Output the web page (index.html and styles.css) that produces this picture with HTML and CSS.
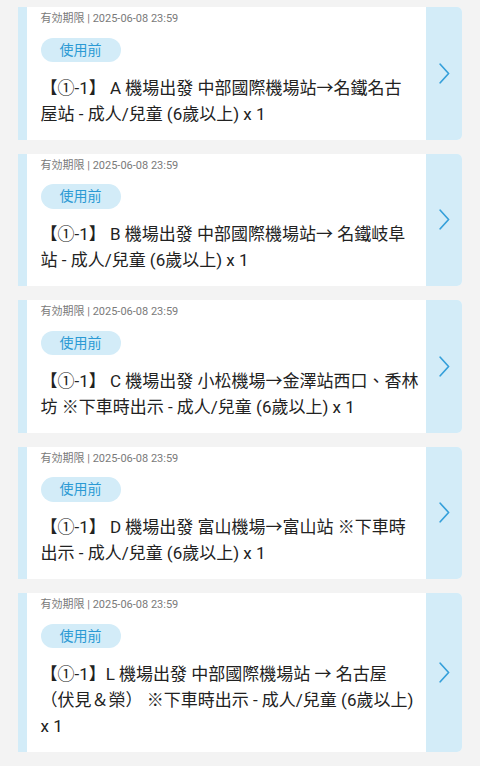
FILE: index.html
```html
<!DOCTYPE html>
<html lang="zh-Hant">
<head>
<meta charset="utf-8">
<title>票券列表</title>
<link rel="stylesheet" href="styles.css">
</head>
<body>
<div class="list">
  <div class="card">
    <div class="stripe"></div>
    <div class="body">
      <div class="exp">有効期限 | 2025-06-08 23:59</div>
      <span class="badge">使用前</span>
      <div class="title">【①-1】 A 機場出發 中部國際機場站→名鐵名古<br>屋站 - 成人/兒童 (6歲以上) x 1</div>
    </div>
    <div class="go"><svg width="11" height="21" viewBox="0 0 11 21"><path d="M1.2 1.2 L9.6 10.5 L1.2 19.8" fill="none" stroke="currentColor" stroke-width="1.7" stroke-linecap="round" stroke-linejoin="round"/></svg></div>
  </div>
  <div class="card">
    <div class="stripe"></div>
    <div class="body">
      <div class="exp">有効期限 | 2025-06-08 23:59</div>
      <span class="badge">使用前</span>
      <div class="title">【①-1】 B 機場出發 中部國際機場站→ 名鐵岐阜<br>站 - 成人/兒童 (6歲以上) x 1</div>
    </div>
    <div class="go"><svg width="11" height="21" viewBox="0 0 11 21"><path d="M1.2 1.2 L9.6 10.5 L1.2 19.8" fill="none" stroke="currentColor" stroke-width="1.7" stroke-linecap="round" stroke-linejoin="round"/></svg></div>
  </div>
  <div class="card">
    <div class="stripe"></div>
    <div class="body">
      <div class="exp">有効期限 | 2025-06-08 23:59</div>
      <span class="badge">使用前</span>
      <div class="title">【①-1】 C 機場出發 小松機場→金澤站西口、香林<br>坊 ※下車時出示 - 成人/兒童 (6歲以上) x 1</div>
    </div>
    <div class="go"><svg width="11" height="21" viewBox="0 0 11 21"><path d="M1.2 1.2 L9.6 10.5 L1.2 19.8" fill="none" stroke="currentColor" stroke-width="1.7" stroke-linecap="round" stroke-linejoin="round"/></svg></div>
  </div>
  <div class="card">
    <div class="stripe"></div>
    <div class="body">
      <div class="exp">有効期限 | 2025-06-08 23:59</div>
      <span class="badge">使用前</span>
      <div class="title">【①-1】 D 機場出發 富山機場→富山站 ※下車時<br>出示 - 成人/兒童 (6歲以上) x 1</div>
    </div>
    <div class="go"><svg width="11" height="21" viewBox="0 0 11 21"><path d="M1.2 1.2 L9.6 10.5 L1.2 19.8" fill="none" stroke="currentColor" stroke-width="1.7" stroke-linecap="round" stroke-linejoin="round"/></svg></div>
  </div>
  <div class="card">
    <div class="stripe"></div>
    <div class="body">
      <div class="exp">有効期限 | 2025-06-08 23:59</div>
      <span class="badge">使用前</span>
      <div class="title">【①-1】L 機場出發 中部國際機場站 → 名古屋<br>（伏見＆榮） ※下車時出示 - 成人/兒童 (6歲以上)<br>x 1</div>
    </div>
    <div class="go"><svg width="11" height="21" viewBox="0 0 11 21"><path d="M1.2 1.2 L9.6 10.5 L1.2 19.8" fill="none" stroke="currentColor" stroke-width="1.7" stroke-linecap="round" stroke-linejoin="round"/></svg></div>
  </div>
</div>
</body>
</html>
```

FILE: styles.css
```css
html, body {
  margin: 0;
  padding: 0;
  background: #f3f3f3;
}

body {
  font-family: Roboto, "Noto Sans CJK TC", "Noto Sans", sans-serif;
  color: #222222;
}

.list {
  display: flex;
  flex-direction: column;
  gap: 14px;
  padding: 7px 18px;
}

.card {
  display: flex;
  align-items: stretch;
  background: #ffffff;
  border-radius: 0 5px 5px 0;
  overflow: hidden;
}

.stripe {
  flex: 0 0 9px;
  background: #d3ecf8;
}

.body {
  flex: 1;
  min-width: 0;
  padding: 4px 2px 13px 13.5px;
  display: flex;
  flex-direction: column;
  align-items: flex-start;
}

.exp {
  font-size: 11px;
  line-height: 16px;
  color: #7a7a7a;
}

.badge {
  margin-top: 10.5px;
  height: 24.5px;
  line-height: 24.5px;
  padding: 0 19px;
  border-radius: 13px;
  background: #d3ecf8;
  color: #2b9ad4;
  font-size: 14px;
}

.title {
  margin-top: 12.5px;
  font-size: 17px;
  line-height: 26px;
  color: #222222;
}

.go {
  flex: 0 0 36px;
  background: #d3ecf8;
  color: #36a0da;
  display: flex;
  align-items: center;
  justify-content: center;
}

.go svg {
  display: block;
}
```
